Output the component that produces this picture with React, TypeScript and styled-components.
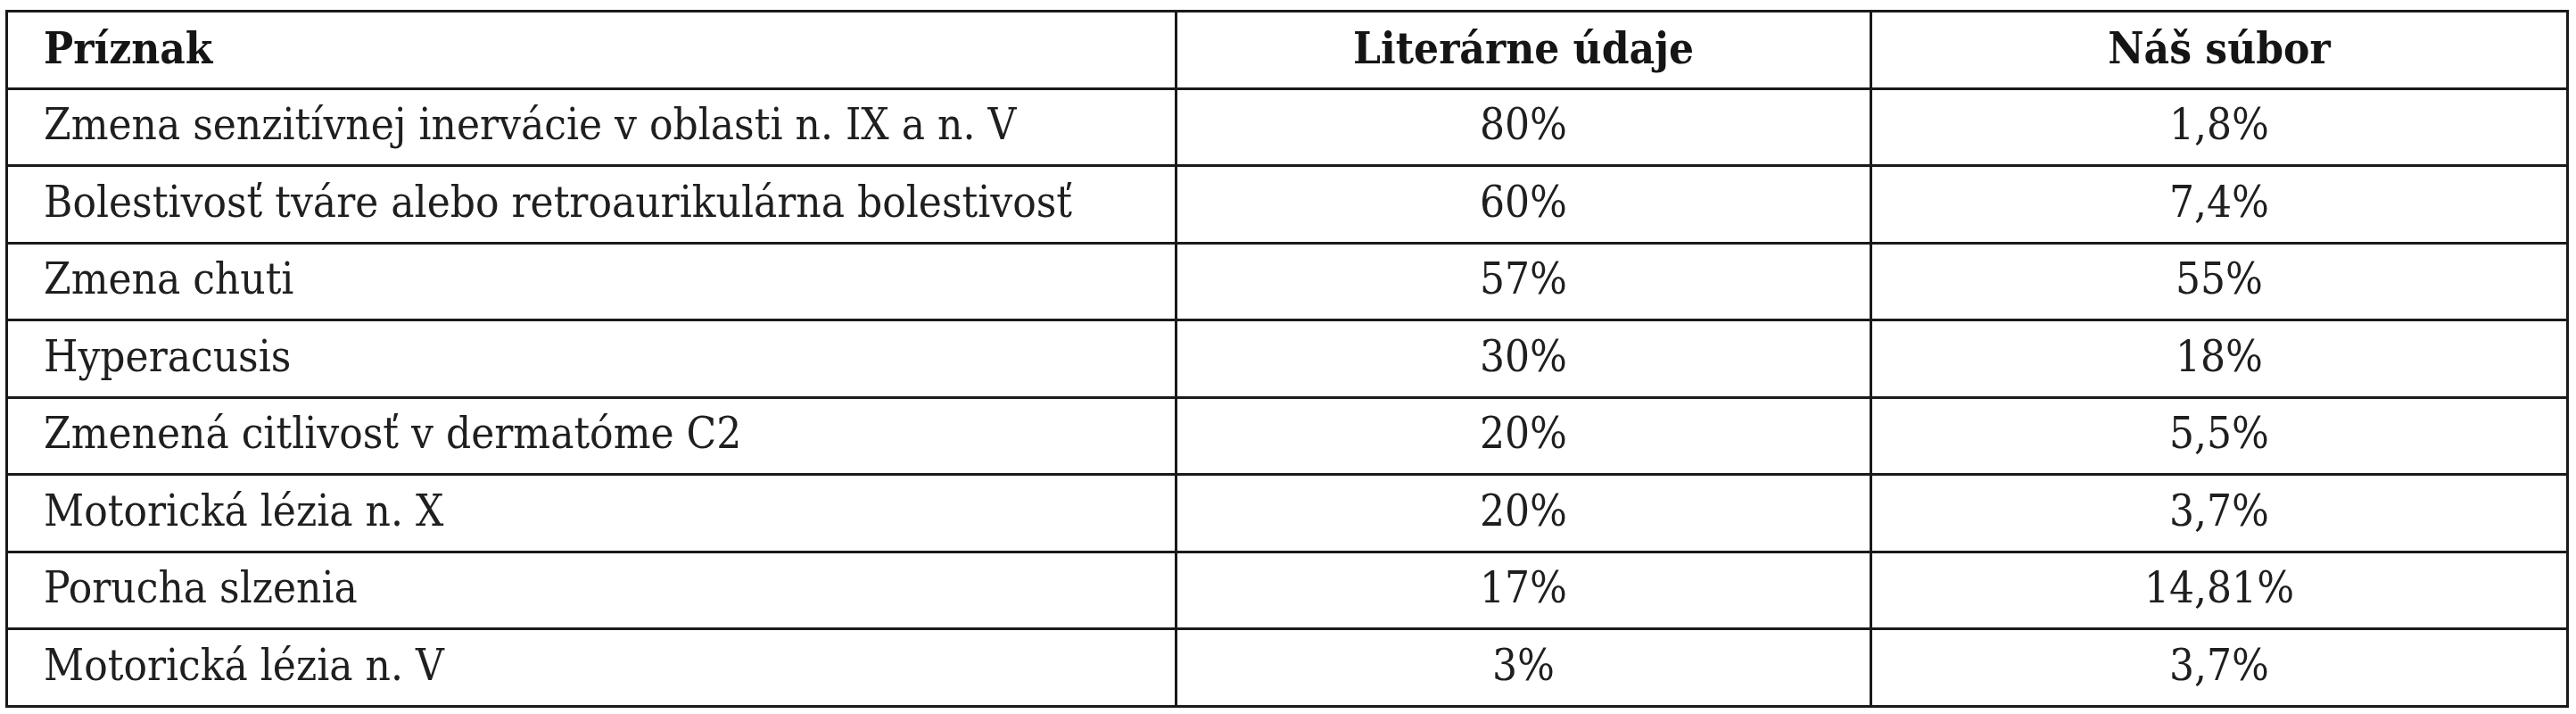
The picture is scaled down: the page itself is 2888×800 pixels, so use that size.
import React from "react";
import styled, { createGlobalStyle } from "styled-components";

const GlobalStyle = createGlobalStyle`
  html, body {
    margin: 0;
    padding: 0;
    background: #ffffff;
  }
`;

const Page = styled.div`
  padding: 11px 0 0 6px;
  font-family: "DejaVu Serif Condensed", "DejaVu Serif", "Liberation Serif", serif;
  font-stretch: condensed;
  color: #1c1c1c;
`;

const Table = styled.table`
  width: 2873px;
  border-collapse: collapse;
  table-layout: fixed;
  border: 3px solid #1a1a1a;
`;

const Row = styled.tr`
  height: 86.5px;
`;

const HeadCell = styled.th<{ $align?: "left" | "center" }>`
  border: 3px solid #1a1a1a;
  padding: 0 0 4px ${(p) => (p.$align === "center" ? "0" : "40px")};
  text-align: ${(p) => p.$align ?? "left"};
  font-size: 49px;
  font-weight: 700;
  color: #151515;
  vertical-align: middle;
`;

const Cell = styled.td<{ $align?: "left" | "center" }>`
  border: 3px solid #1a1a1a;
  padding: 0 0 5px ${(p) => (p.$align === "center" ? "0" : "40px")};
  text-align: ${(p) => p.$align ?? "left"};
  font-size: 49px;
  color: #1f1f1f;
  vertical-align: middle;
  white-space: nowrap;
`;

const rows: [string, string, string][] = [
  ["Zmena senzitívnej inervácie v oblasti n. IX a n. V", "80%", "1,8%"],
  ["Bolestivosť tváre alebo retroaurikulárna bolestivosť", "60%", "7,4%"],
  ["Zmena chuti", "57%", "55%"],
  ["Hyperacusis", "30%", "18%"],
  ["Zmenená citlivosť v dermatóme C2", "20%", "5,5%"],
  ["Motorická lézia n. X", "20%", "3,7%"],
  ["Porucha slzenia", "17%", "14,81%"],
  ["Motorická lézia n. V", "3%", "3,7%"],
];

const App: React.FC = () => {
  return (
    <>
      <GlobalStyle />
      <Page>
        <Table>
          <colgroup>
            <col style={{ width: 1311 }} />
            <col style={{ width: 779 }} />
            <col style={{ width: 781 }} />
          </colgroup>
          <thead>
            <Row>
              <HeadCell>Príznak</HeadCell>
              <HeadCell $align="center">Literárne údaje</HeadCell>
              <HeadCell $align="center">Náš súbor</HeadCell>
            </Row>
          </thead>
          <tbody>
            {rows.map(([name, lit, ours]) => (
              <Row key={name}>
                <Cell>{name}</Cell>
                <Cell $align="center">{lit}</Cell>
                <Cell $align="center">{ours}</Cell>
              </Row>
            ))}
          </tbody>
        </Table>
      </Page>
    </>
  );
};

export default App;
